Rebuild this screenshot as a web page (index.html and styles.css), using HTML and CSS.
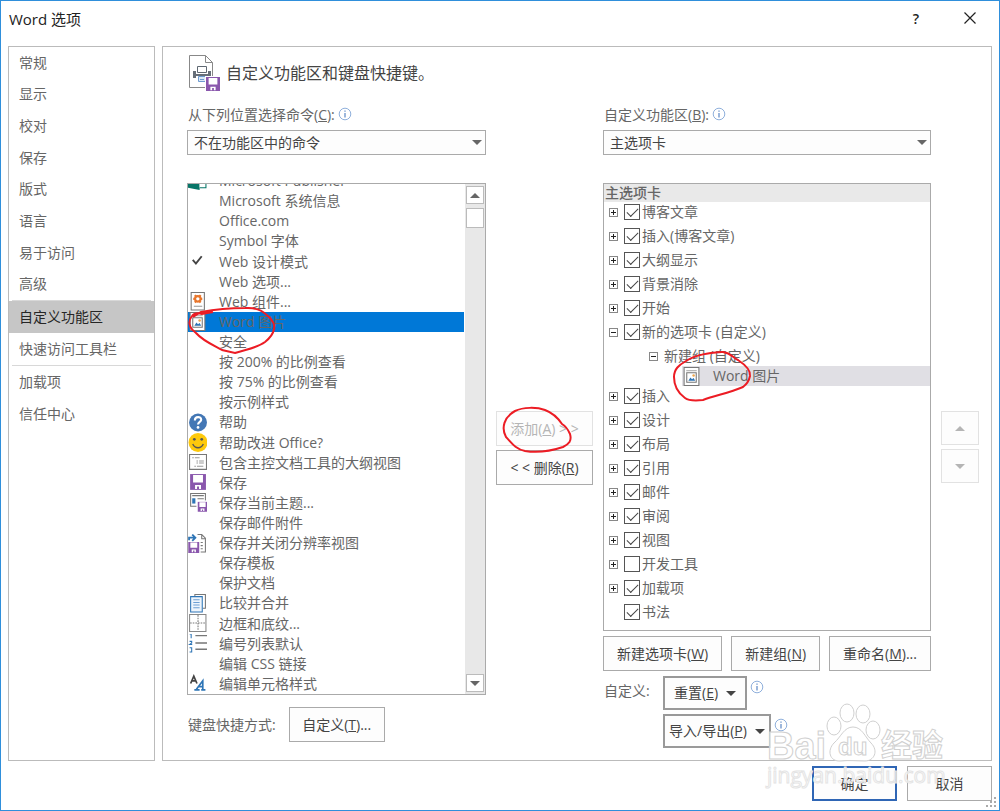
FILE: index.html
```html
<!DOCTYPE html>
<html lang="zh-CN">
<head>
    <meta charset="UTF-8">
    <meta name="viewport" content="width=device-width, initial-scale=1.0">
    <title>Word 选项</title>
    <link rel="stylesheet" href="styles.css">
</head>
<body>
    <svg class="defs" width="0" height="0">
        <symbol id="info" viewBox="0 0 14 14">
            <circle cx="7" cy="7" r="5.8" fill="#fff" stroke="#8fb0dc"/>
            <path d="M7 6v4.5M7 3.4v1.3" stroke="#5b87c5" stroke-width="1.2"/>
        </symbol>
        <symbol id="save" viewBox="0 0 16 16">
            <path d="M0 0h16v16H0z" fill="#8a57ad"/>
            <path d="M3 1h10v7.500H3zM5 11h6v4H9v-2.500H7V15H5z" fill="#fff"/>
        </symbol>
        <symbol id="picture" viewBox="0 0 16 18">
            <path d="M1 .5h14v17H1z" fill="#fff" stroke="#777"/>
            <path d="M3 3.500h10" stroke="#aaa"/>
            <path d="M3.500 5.500h9v9h-9z" fill="#fff" stroke="#777"/>
            <path d="M5 13l2-3 1.500 1.500L10 10.500 11.500 13z" fill="#2e75b6"/>
            <circle cx="10" cy="8" r="1.200" fill="#eda64e"/>
        </symbol>
    </svg>

    <div class="dialog">
        <header class="titlebar">
            <h1>Word 选项</h1>
            <button class="title-btn" aria-label="帮助">?</button>
            <button class="title-btn" aria-label="关闭">
                <svg width="12" height="12" viewBox="0 0 12 12"><path d="M.5.5l11 11M11.500.5l-11 11" stroke="#222" stroke-width="1.200"/></svg>
            </button>
        </header>

        <main class="main">
            <nav class="sidebar">
                <div class="nav-group nav-general">
                    <a href="#">常规</a>
                    <a href="#">显示</a>
                    <a href="#">校对</a>
                    <a href="#">保存</a>
                    <a href="#">版式</a>
                    <a href="#">语言</a>
                    <a href="#">易于访问</a>
                    <a href="#">高级</a>
                </div>
                <div class="nav-group">
                    <a href="#" class="selected">自定义功能区</a>
                    <a href="#">快速访问工具栏</a>
                </div>
                <div class="nav-group">
                    <a href="#">加载项</a>
                    <a href="#">信任中心</a>
                </div>
            </nav>

            <section class="panel">
                <div class="panel-head">
                    <svg width="34" height="38" viewBox="0 0 34 38">
                        <path d="M2.500 1.500h16l7 7v25h-23z" fill="#fff" stroke="#888"/>
                        <path d="M18.500 1.500v7h7" fill="none" stroke="#888"/>
                        <path d="M6 17h3v3h12v-3h3v7h-3v-2H9v2H6z" fill="#666e78"/>
                        <path d="M10.500 12.500h9v6h-9z" fill="#fff" stroke="#5f6872"/>
                        <path d="M7 20h16v2H7z" fill="#666e78"/>
                        <path d="M11.500 22.500h7v5h-7z" fill="#dcebf8" stroke="#6f9bd0"/>
                        <path d="M13 25.500h4" stroke="#6f9bd0"/>
                        <path d="M18 22h15v15H18z" fill="#fff"/>
                        <use href="#save" x="19" y="23" width="14" height="14"/>
                    </svg>
                    <h2>自定义功能区和键盘快捷键。</h2>
                </div>

                <div class="columns">
                    <div class="column source">
                        <div class="field-label"><label for="from">从下列位置选择命令(<u>C</u>):</label><svg class="info"><use href="#info"/></svg></div>
                        <div class="dropdown">
                            <select id="from"><option>不在功能区中的命令</option></select>
                        </div>
                        <div class="list-wrap">
                            <div class="listbox">
                                <ul class="commands">
                                    <li><svg class="icon" viewBox="0 0 18 18"><path d="M0 1h11v16L0 15z" fill="#077568"/><path d="M11 3h6v12h-6" fill="#fff" stroke="#077568"/></svg>Microsoft Publisher</li>
                                    <li>Microsoft 系统信息</li>
                                    <li>Office.com</li>
                                    <li>Symbol 字体</li>
                                    <li><svg class="icon" viewBox="0 0 18 18"><path d="M4.500 7.500l3 3.500 5.500-7" fill="none" stroke="#444" stroke-width="1.800"/></svg>Web 设计模式</li>
                                    <li>Web 选项...</li>
                                    <li><svg class="icon" viewBox="0 0 18 18"><path d="M3 .5h12.500v16.500H3z" fill="#fff" stroke="#777"/><circle cx="9.300" cy="6.500" r="2.600" fill="none" stroke="#e8762c" stroke-width="2"/><path d="M5 6.500h1.500M12 6.500h1.500M6.500 3l1.300 1.500M12 3l-1.300 1.500M6.500 10l1.300-1.500M12 10l-1.300-1.500" stroke="#e8762c" stroke-width="2"/><path d="M5.500 13.500h8" stroke="#999"/></svg>Web 组件...</li>
                                    <li class="active"><svg class="icon"><use href="#picture"/></svg>Word 图片</li>
                                    <li>安全</li>
                                    <li>按 200% 的比例查看</li>
                                    <li>按 75% 的比例查看</li>
                                    <li>按示例样式</li>
                                    <li><svg class="icon" viewBox="0 0 18 18"><circle cx="9.500" cy="9" r="8.500" fill="#4377b5"/><path d="M6.500 7c0-4 6-4 6-.7 0 2.200-3 2-3 4.700" fill="none" stroke="#fff" stroke-width="2"/><circle cx="9.500" cy="13.700" r="1.300" fill="#fff"/></svg>帮助</li>
                                    <li><svg class="icon" viewBox="0 0 18 18"><circle cx="9.500" cy="9" r="9" fill="#fdc90c"/><circle cx="6" cy="6" r="1.300" fill="#555"/><circle cx="13" cy="6" r="1.300" fill="#555"/><path d="M4.500 10.500c2 4.700 8 4.700 10 0" fill="none" stroke="#555" stroke-width="1.300"/></svg>帮助改进 Office?</li>
                                    <li><svg class="icon" viewBox="0 0 18 18"><path d="M1.500 1.500h16v14h-16z" fill="#fff" stroke="#777"/><path d="M4 4.500h7M8 7.500h7M8 9.500h7M6 12.500h9" stroke="#999" stroke-dasharray="1.500 1 6"/></svg>包含主控文档工具的大纲视图</li>
                                    <li><svg class="icon" viewBox="0 0 18 18"><use href="#save" x="2" y="1" width="15" height="15"/></svg>保存</li>
                                    <li><svg class="icon" viewBox="0 0 18 18"><path d="M2.500.5h14v12h-14z" fill="#fff" stroke="#777"/><path d="M4 2.500h11M9 5.500h6" stroke="#777"/><path d="M4 5h3v5H4z" fill="#2e75b6"/><path d="M8 7h10v11H8z" fill="#fff"/><use href="#save" x="9" y="8" width="9.500" height="10"/></svg>保存当前主题...</li>
                                    <li>保存邮件附件</li>
                                    <li><svg class="icon" viewBox="0 0 18 18"><path d="M9 .5h4l3.500 3.500v13H12M13 .5v4h3.500M12 8h2M12 11h2M12 14h2" fill="none" stroke="#777"/><path d="M1 6V3.500h5M4 .5l3 3-3 3" fill="none" stroke="#2e75b6" stroke-width="1.700"/><use href="#save" x="0" y="7.500" width="11" height="10.500"/></svg>保存并关闭分辨率视图</li>
                                    <li>保存模板</li>
                                    <li>保护文档</li>
                                    <li><svg class="icon" viewBox="0 0 18 18"><path d="M6.500 2V.5h10v13H14" fill="none" stroke="#777"/><path d="M2.500 2.500h11v14.500h-11z" fill="#eef5fc" stroke="#2e75b6"/><path d="M5 5.500h6M5 8h6M5 10.500h6M5 13h6" stroke="#6ea0d4"/></svg>比较并合并</li>
                                    <li><svg class="icon" viewBox="0 0 18 18"><path d="M1.500.5h15.500v16H1.500z" fill="#fff" stroke="#888"/><path d="M9.500 1v15M2 8.500h15" stroke="#777" stroke-dasharray="1.500 1"/></svg>边框和底纹...</li>
                                    <li><svg class="icon" viewBox="0 0 18 18"><path d="M7 1.500h11M7 8.500h11M7 14.500h11" stroke="#777" stroke-width="1.300"/><path d="M1.500 0h1.500v4M1.500 7h2v1.500l-2 1.500h2.500M1.500 13h2v4h-2" fill="none" stroke="#2e75b6"/></svg>编号列表默认</li>
                                    <li>编辑 CSS 链接</li>
                                    <li><svg class="icon" viewBox="0 0 18 18"><path d="M2.500 9L5.500 2l3 7M3.500 6.500h4" fill="none" stroke="#444" stroke-width="1.600"/><path d="M8 14.500l6-8v8M10 12h4M6 15h5M12.500 15h4" fill="none" stroke="#2e75b6" stroke-width="1.600"/></svg>编辑单元格样式</li>
                                </ul>
                                <div class="scrollbar">
                                    <button class="scroll-btn" aria-label="向上"><span class="arrow up"></span></button>
                                    <div class="thumb"></div>
                                    <button class="scroll-btn scroll-end" aria-label="向下"><span class="arrow down"></span></button>
                                </div>
                            </div>
                            <svg class="mark mark-source" width="90" height="50" viewBox="0 0 90 50"><path d="M6 12L14 7C30 4 45 3 58 3C72 2 78 8 82 12C86 16 88 20 87 24C86 30 83 33 78 37C70 43 60 44 48 48L35 45C28 41 16 36 9 28C1 22 1 16 5 11Q8 7 15 9L26 7"/></svg>
                        </div>
                        <div class="shortcut">
                            <span>键盘快捷方式:</span>
                            <button class="btn">自定义(<u>T</u>)...</button>
                        </div>
                    </div>

                    <div class="transfer">
                        <button class="btn" disabled>添加(<u>A</u>) &gt; &gt;</button>
                        <button class="btn">&lt; &lt; 删除(<u>R</u>)</button>
                        <svg class="mark mark-add" width="72" height="48" viewBox="0 0 72 48"><path d="M14 5C22 1 36 1 44 4C52 7 57 12 61 18Q66 21 69 28C71 35 68 38 62 41C50 45 36 47 24 45C14 43 10 36 5 31C0 22 3 11 14 5z"/></svg>
                    </div>

                    <div class="column target">
                        <div class="field-label"><label for="to">自定义功能区(<u>B</u>):</label><svg class="info"><use href="#info"/></svg></div>
                        <div class="dropdown">
                            <select id="to"><option>主选项卡</option></select>
                        </div>
                        <div class="tree">
                            <div class="tree-head">主选项卡</div>
                            <ul>
                                <li><div class="row"><button class="toggle" aria-label="展开"></button><label><input type="checkbox" checked>博客文章</label></div></li>
                                <li><div class="row"><button class="toggle" aria-label="展开"></button><label><input type="checkbox" checked>插入(博客文章)</label></div></li>
                                <li><div class="row"><button class="toggle" aria-label="展开"></button><label><input type="checkbox" checked>大纲显示</label></div></li>
                                <li><div class="row"><button class="toggle" aria-label="展开"></button><label><input type="checkbox" checked>背景消除</label></div></li>
                                <li><div class="row"><button class="toggle" aria-label="展开"></button><label><input type="checkbox" checked>开始</label></div></li>
                                <li>
                                    <div class="row"><button class="toggle open" aria-label="折叠"></button><label><input type="checkbox" checked>新的选项卡 (自定义)</label></div>
                                    <div class="row group"><button class="toggle open" aria-label="折叠"></button><span>新建组 (自定义)</span></div>
                                    <div class="row command"><svg class="icon"><use href="#picture"/></svg><span>Word 图片</span>
                                        <svg class="mark mark-target" width="82" height="54" viewBox="0 0 82 54"><path d="M3 28C3 20 8 16 15 12C25 5 40 4 52 3C60 4 62 9 67 11C73 15 80 21 79 27C78 32 76 35 72 38C58 44 46 46 32 51C23 52 18 52 14 49C7 44 3 37 3 28z"/></svg>
                                    </div>
                                </li>
                                <li><div class="row"><button class="toggle" aria-label="展开"></button><label><input type="checkbox" checked>插入</label></div></li>
                                <li><div class="row"><button class="toggle" aria-label="展开"></button><label><input type="checkbox" checked>设计</label></div></li>
                                <li><div class="row"><button class="toggle" aria-label="展开"></button><label><input type="checkbox" checked>布局</label></div></li>
                                <li><div class="row"><button class="toggle" aria-label="展开"></button><label><input type="checkbox" checked>引用</label></div></li>
                                <li><div class="row"><button class="toggle" aria-label="展开"></button><label><input type="checkbox" checked>邮件</label></div></li>
                                <li><div class="row"><button class="toggle" aria-label="展开"></button><label><input type="checkbox" checked>审阅</label></div></li>
                                <li><div class="row"><button class="toggle" aria-label="展开"></button><label><input type="checkbox" checked>视图</label></div></li>
                                <li><div class="row"><button class="toggle" aria-label="展开"></button><label><input type="checkbox">开发工具</label></div></li>
                                <li><div class="row"><button class="toggle" aria-label="展开"></button><label><input type="checkbox" checked>加载项</label></div></li>
                                <li><div class="row leaf"><label><input type="checkbox" checked>书法</label></div></li>
                            </ul>
                        </div>
                        <div class="tree-actions">
                            <button class="btn">新建选项卡(<u>W</u>)</button>
                            <button class="btn">新建组(<u>N</u>)</button>
                            <button class="btn">重命名(<u>M</u>)...</button>
                        </div>
                        <div class="customize">
                            <span class="customize-label">自定义:</span>
                            <div class="menus">
                                <div class="menu-line"><button class="btn menu-btn reset"><span>重置(<u>E</u>)</span><span class="arrow down"></span></button><svg class="info"><use href="#info"/></svg></div>
                                <div class="menu-line"><button class="btn menu-btn"><span>导入/导出(<u>P</u>)</span><span class="arrow down"></span></button><svg class="info"><use href="#info"/></svg></div>
                            </div>
                        </div>
                    </div>

                    <div class="order">
                        <button class="btn" disabled aria-label="上移"><span class="arrow up"></span></button>
                        <button class="btn" disabled aria-label="下移"><span class="arrow down"></span></button>
                    </div>
                </div>
            </section>
        </main>

        <footer class="footer">
            <button class="btn ok">确定</button>
            <button class="btn">取消</button>
        </footer>

        <svg class="watermark" width="190" height="90" viewBox="0 0 190 90">
            <g fill="#fff" fill-opacity=".8" stroke="#d0d0d0">
                <text x="6" y="59" class="wm-logo">Bai</text>
                <ellipse cx="73" cy="26" rx="7" ry="9"/>
                <ellipse cx="86" cy="13" rx="7" ry="9"/>
                <ellipse cx="102" cy="14" rx="7" ry="9"/>
                <ellipse cx="112" cy="30" rx="7" ry="9"/>
                <path d="M92 27c9 0 12 10 18 16 8 8 3 18-6 18-8 0-16-1-24 0-12 1-14-11-7-18 7-6 10-16 19-16z"/>
                <text x="77" y="55" class="wm-du">du</text>
                <text x="120" y="56" class="wm-cn">经验</text>
            </g>
            <text x="6" y="83" class="wm-url">jingyan.baidu.com</text>
        </svg>
        <svg class="grip" width="12" height="12" viewBox="0 0 12 12"><path d="M9 0h2v2H9zM5 4h2v2H5zM9 4h2v2H9zM1 8h2v2H1zM5 8h2v2H5zM9 8h2v2H9z" fill="#aaa"/></svg>
    </div>
</body>
</html>
```
FILE: styles.css
```css
* {
    box-sizing: border-box;
}
body {
    margin: 0;
    font-family: "Open Sans", "Noto Sans CJK SC", sans-serif;
    font-size: 14px;
    line-height: 20px;
    color: #666;
    background: #fff;
}
ul {
    list-style: none;
    margin: 0;
    padding: 0;
}
button, select, input {
    font: inherit;
    color: inherit;
    margin: 0;
}
.defs {
    position: absolute;
}
.dialog {
    position: relative;
    min-height: 100vh;
    display: flex;
    flex-direction: column;
    border: 1px solid #2f8fdb;
}

/* title bar */
.titlebar {
    display: flex;
    align-items: center;
    height: 45px;
    padding: 0 16px 10px 8px;
    color: #222;
}
.titlebar h1 {
    flex: 1;
    margin: 0;
    font-size: 15px;
    font-weight: normal;
}
.title-btn {
    width: 26px;
    height: 26px;
    margin-left: 28px;
    padding: 0;
    border: none;
    background: none;
    font-weight: 600;
}

/* side navigation */
.main {
    flex: 1;
    display: flex;
    gap: 7px;
    padding: 0 7px;
}
.sidebar {
    width: 147px;
    border: 1px solid #bbb;
}
.nav-group {
    display: grid;
    grid-auto-rows: 32px;
}
.nav-general {
    grid-auto-rows: 1fr;
    height: 253px;
}
.nav-group + .nav-group {
    padding-top: 1px;
    background: linear-gradient(#d8d8d8, #d8d8d8) center top / 139px 1px no-repeat;
}
.nav-group a {
    display: flex;
    align-items: center;
    padding-left: 10px;
    color: #666;
    text-decoration: none;
}
.nav-group a.selected {
    background: #c6c6c6;
    color: #262626;
}

/* panel */
.panel {
    flex: 1;
    display: flex;
    flex-direction: column;
    border: 1px solid #bbb;
    padding: 7px 12px 12px 24px;
}
.panel-head {
    display: flex;
    align-items: center;
    gap: 5px;
    height: 38px;
    margin-bottom: 13px;
}
.panel-head h2 {
    margin: 0;
    font-size: 16px;
    font-weight: normal;
    color: #444;
}
.columns {
    flex: 1;
    display: grid;
    grid-template-columns: 299fr 97px 328fr 38px;
    gap: 10px;
}
.column {
    display: flex;
    flex-direction: column;
    min-width: 0;
}
.source {
    padding-bottom: 6px;
}
.field-label {
    display: flex;
    height: 25px;
    padding-left: 1px;
}
.info {
    width: 14px;
    height: 14px;
    margin: 2px 0 0 3px;
}
.dropdown {
    position: relative;
    margin-bottom: 28px;
}
.dropdown select {
    display: block;
    width: 100%;
    height: 25px;
    padding: 0 6px;
    border: 1px solid #aaa;
    border-radius: 0;
    background: #fdfdfd;
    color: #444;
    appearance: none;
}
.dropdown::after {
    content: "";
    position: absolute;
    right: 4px;
    top: 10px;
    border: 5px solid transparent;
    border-top-color: #666;
    border-bottom: none;
}
.btn {
    height: 35px;
    padding: 0 4px;
    border: 1px solid #aaa;
    background: #fdfdfd;
    color: #444;
    white-space: nowrap;
}
.btn:disabled {
    border-color: #e2e2e2;
    color: #b5b5b5;
}
.arrow {
    display: inline-block;
    border: 5px solid transparent;
}
.arrow.up {
    border-top: none;
    border-bottom-color: currentColor;
}
.arrow.down {
    border-bottom: none;
    border-top-color: currentColor;
}

/* command list */
.list-wrap {
    flex: 1;
    display: flex;
    position: relative;
}
.listbox {
    flex: 1;
    display: flex;
    overflow: hidden;
    border: 1px solid #aaa;
}
.commands {
    flex: 1;
    display: grid;
    grid-auto-rows: 1fr;
    margin-top: -13px;
}
.commands li {
    display: flex;
    align-items: center;
    padding-left: 31px;
}
.commands .icon {
    margin: 0 12px 0 -31px;
}
.icon {
    flex: none;
    width: 19px;
    height: 19px;
}
.commands .active {
    background: #0078d7;
}
.scrollbar {
    display: flex;
    flex-direction: column;
    width: 20px;
    margin-left: 1px;
    padding: 2px 1px;
    background: #e8e8e8;
}
.scroll-btn {
    display: flex;
    align-items: center;
    justify-content: center;
    height: 18px;
    padding: 0;
    border: 1px solid #bbb;
    background: #fff;
}
.scroll-end {
    margin-top: auto;
}
.thumb {
    height: 20px;
    margin-top: 4px;
    border: 1px solid #bbb;
    background: #fff;
}
.shortcut {
    display: flex;
    align-items: center;
    gap: 13px;
    margin-top: 12px;
    padding-left: 1px;
}
.shortcut .btn {
    width: 96px;
}

/* add and remove */
.transfer, .order {
    position: relative;
    display: flex;
    flex-direction: column;
    gap: 4px;
    padding-top: 306px;
}
.order .btn {
    display: flex;
    align-items: center;
    justify-content: center;
    height: 34px;
}

/* ribbon tree */
.tree {
    flex: 1;
    border: 1px solid #aaa;
}
.tree-head {
    height: 18px;
    padding-left: 1px;
    line-height: 18px;
    font-weight: 500;
    background: #e9e9e9;
}
.row {
    position: relative;
    display: flex;
    align-items: center;
    height: 24px;
    padding: 0 0 4px 5px;
}
.row label {
    display: flex;
    align-items: center;
    gap: 2px;
}
.row input {
    appearance: none;
    width: 16px;
    height: 16px;
    border: 1px solid #555;
    background: #fff;
}
.row input:checked::before {
    content: "";
    display: block;
    width: 10px;
    height: 5px;
    margin: 3px 2px;
    border: solid #444;
    border-width: 0 0 1px 1px;
    transform: rotate(-45deg);
}
.toggle {
    width: 9px;
    height: 9px;
    margin-right: 6px;
    padding: 0;
    border: 1px solid #888;
    background: linear-gradient(#222, #222) center / 5px 1px no-repeat, linear-gradient(#222, #222) center / 1px 5px no-repeat;
}
.toggle.open {
    background: linear-gradient(#222, #222) center / 5px 1px no-repeat;
}
.leaf {
    padding-left: 20px;
}
.group {
    height: 20px;
    padding: 0 0 0 45px;
}
.command {
    height: 20px;
    margin-left: 78px;
    padding: 0;
    gap: 12px;
    background: #e0dfe4;
}
.tree-actions {
    display: flex;
    justify-content: space-between;
    margin: 5px 0;
}
.tree-actions .btn {
    padding: 0 13px;
}
.customize {
    display: flex;
    padding-left: 1px;
}
.customize-label {
    width: 59px;
    padding-top: 5px;
}
.menus {
    display: flex;
    flex-direction: column;
    gap: 4px;
}
.menu-line {
    display: flex;
}
.menu-line .info {
    margin-top: 4px;
}
.menu-btn {
    display: flex;
    align-items: center;
    gap: 8px;
    height: 34px;
    border: 2px solid #999;
}
.reset {
    padding: 0 9px;
}

/* hand drawn circles */
.mark {
    position: absolute;
    fill: none;
    stroke: #ec1c24;
    stroke-width: 2px;
    pointer-events: none;
}
.mark-source {
    left: 0;
    top: 122px;
}
.mark-add {
    left: 5px;
    top: 301px;
}
.mark-target {
    left: -11px;
    top: -17px;
}

/* footer */
.footer {
    display: flex;
    justify-content: flex-end;
    gap: 10px;
    padding: 5px 7px 9px;
}
.footer .btn {
    width: 85px;
}
.footer .ok {
    border: 2px solid #2f66b5;
}
.watermark {
    position: absolute;
    right: 48px;
    bottom: 20px;
    pointer-events: none;
    font-family: "Liberation Sans", "Noto Sans CJK SC", sans-serif;
}
.wm-logo {
    font-size: 38px;
    font-weight: bold;
}
.wm-du {
    font-size: 24px;
    font-weight: bold;
}
.wm-cn {
    font-size: 31px;
    font-weight: bold;
}
.wm-url {
    font-family: "Open Sans", sans-serif;
    font-size: 21px;
    fill: #fff;
    fill-opacity: 0.7;
    stroke: #e4e4e4;
}
.grip {
    position: absolute;
    right: 2px;
    bottom: 1px;
}
```
